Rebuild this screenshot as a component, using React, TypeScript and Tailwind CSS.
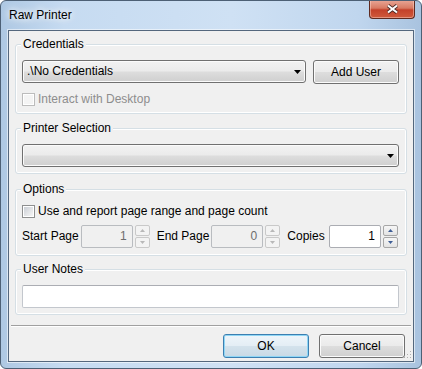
import React, { FC, ReactNode } from "react";

// Windows 7 style "Raw Printer" dialog

const comboBg =
  "bg-[linear-gradient(#f2f2f2_0%,#ebebeb_48%,#dddddd_52%,#cfcfcf_100%)] shadow-[inset_0_0_0_1px_#fbfbfb]";

const GroupBox: FC<{ title: string; className?: string; children: ReactNode }> = ({
  title,
  className,
  children,
}) => (
  <div
    className={`relative rounded-[3px] border border-[#d5dfe5] shadow-[inset_0_0_0_1px_#ffffff] ${className ?? ""}`}
  >
    <span className="absolute -top-[8px] left-[5px] bg-[#f0f0f0] px-[2px] leading-[15px]">
      {title}
    </span>
    {children}
  </div>
);

const DropArrow: FC = () => (
  <svg width="7" height="4" viewBox="0 0 7 4" className="shrink-0">
    <polygon points="0,0 7,0 3.5,4" fill="#000" />
  </svg>
);

const Combo: FC<{ text?: string; className?: string }> = ({ text, className }) => (
  <div
    className={`flex h-[23px] items-center rounded-[3px] border border-[#707070] pl-[4px] pr-[4px] ${comboBg} ${className ?? ""}`}
  >
    <span className="flex-1 leading-[15px]">{text}</span>
    <DropArrow />
  </div>
);

const PushButton: FC<{ label: string; isDefault?: boolean; className?: string }> = ({
  label,
  isDefault,
  className,
}) => (
  <button
    className={`flex h-[24px] w-[86px] items-center justify-center rounded-[3px] border leading-[15px] ${
      isDefault
        ? "border-[#3c7fb1] bg-[linear-gradient(#eef5fa_0%,#e4eef5_48%,#d3e2ec_52%,#c8d9e5_100%)] shadow-[inset_0_0_0_1px_#8fd6f5]"
        : `border-[#707070] ${comboBg}`
    } ${className ?? ""}`}
  >
    {label}
  </button>
);

const CheckBox: FC<{ label: string; disabled?: boolean }> = ({ label, disabled }) => (
  <div className="flex items-center">
    <span
      className={`box-border flex h-[13px] w-[13px] items-center justify-center border bg-white ${
        disabled ? "border-[#bcbcbc]" : "border-[#8e8f8f]"
      }`}
    >
      <span
        className={`h-[9px] w-[9px] ${
          disabled
            ? "bg-[#f4f4f4]"
            : "bg-[linear-gradient(135deg,#cbcfd5,#f6f6f6)]"
        }`}
      />
    </span>
    <span
      className={`ml-[3px] leading-[15px] ${disabled ? "text-[#8d8d8d]" : "text-black"}`}
    >
      {label}
    </span>
  </div>
);

const Spinner: FC<{ disabled?: boolean }> = ({ disabled }) => {
  const half = `flex h-[11px] w-[15px] items-center justify-center rounded-[2px] border ${
    disabled
      ? "border-[#c9c9c9] bg-[#f3f3f3]"
      : "border-[#a6a6a6] bg-[linear-gradient(#f6f6f6,#e3e3e3)]"
  }`;
  const fill = disabled ? "#b8b8b8" : "#3e5d95";
  return (
    <div className="ml-[2px] flex flex-col gap-[1px]">
      <div className={half}>
        <svg width="5" height="3" viewBox="0 0 5 3">
          <polygon points="0,3 5,3 2.5,0" fill={fill} />
        </svg>
      </div>
      <div className={half}>
        <svg width="5" height="3" viewBox="0 0 5 3">
          <polygon points="0,0 5,0 2.5,3" fill={fill} />
        </svg>
      </div>
    </div>
  );
};

const NumberBox: FC<{ value: string; disabled?: boolean }> = ({ value, disabled }) => (
  <div
    className={`flex h-[23px] w-[52px] items-center justify-end rounded-[2px] border pr-[5px] leading-[15px] ${
      disabled
        ? "border-[#b9bcc0] bg-[#f0f0f0] text-[#6d6d6d]"
        : "border-[#abadb3] bg-white text-black"
    }`}
  >
    {value}
  </div>
);

const App: FC = () => {
  return (
    <div
      className={`flex h-[369px] w-[422px] flex-col overflow-hidden rounded-[6px] border border-[#4d6075] bg-[linear-gradient(90deg,#aec8e3_0%,#c6dbf1_15%,#cfe1f4_55%,#c0d6ee_85%,#a9c3df_100%)] text-[12px] text-black ${"font-['Liberation_Sans',Arial,sans-serif]"}`}
    >
      {/* title bar */}
      <div className="flex h-[29px] shrink-0 items-start justify-between">
        <span className="ml-[8px] mt-[7px] leading-[15px] [text-shadow:0_0_6px_#ffffff,0_0_10px_#ffffff]">
          Raw Printer
        </span>
        <div className="-mt-px mr-[6px] flex h-[19px] w-[46px] items-center justify-center rounded-b-[4px] border border-t-0 border-[#5e2a20] bg-[linear-gradient(#e9a898_0%,#d87a63_45%,#c4412a_55%,#cf5a3c_100%)] shadow-[inset_0_0_0_1px_rgba(255,220,210,0.45)]">
          <svg width="13" height="10" viewBox="0 0 13 10">
            <path d="M2 1.5 L11 8.5 M11 1.5 L2 8.5" stroke="#4a2a26" strokeWidth="3.6" />
            <path d="M2 1.5 L11 8.5 M11 1.5 L2 8.5" stroke="#ffffff" strokeWidth="2" />
          </svg>
        </div>
      </div>

      {/* client area */}
      <div className="relative mx-[7px] mb-[6px] flex flex-1 flex-col border border-[#54677d] bg-[#f0f0f0] px-[6px] shadow-[0_0_0_1px_rgba(255,255,255,0.55)]">
        <GroupBox title="Credentials" className="mt-[13px] pb-[6px] pl-[6px] pr-[7px] pt-[15px]">
          <div className="flex gap-[7px]">
            <Combo text=".\No Credentials" className="flex-1" />
            <PushButton label="Add User" className="h-[23px]" />
          </div>
          <div className="mt-[8px]">
            <CheckBox label="Interact with Desktop" disabled />
          </div>
        </GroupBox>

        <GroupBox title="Printer Selection" className="mt-[14px] pb-[6px] pl-[6px] pr-[7px] pt-[15px]">
          <Combo />
        </GroupBox>

        <GroupBox title="Options" className="mt-[15px] pb-[7px] pl-[6px] pr-[8px] pt-[14px]">
          <CheckBox label="Use and report page range and page count" />
          <div className="mt-[6px] flex items-center">
            <span className="w-[59px] leading-[15px]">Start Page</span>
            <NumberBox value="1" disabled />
            <Spinner disabled />
            <span className="ml-[7px] w-[55px] leading-[15px]">End Page</span>
            <NumberBox value="0" disabled />
            <Spinner disabled />
            <span className="ml-[7px] w-[42px] leading-[15px]">Copies</span>
            <NumberBox value="1" />
            <Spinner />
          </div>
        </GroupBox>

        <GroupBox title="User Notes" className="mt-[13px] pb-[6px] pl-[6px] pr-[7px] pt-[15px]">
          <div className="h-[23px] rounded-[2px] border border-[#c3c7cd] border-t-[#abadb3] bg-white" />
        </GroupBox>

        <div className="-mx-[4px] mt-[10px] h-px bg-[#a0a0a0]" />
        <div className="-mx-[4px] h-px bg-white" />

        <div className="mt-[7px] flex justify-end gap-[10px] pr-[2px]">
          <PushButton label="OK" isDefault />
          <PushButton label="Cancel" />
        </div>

        {/* size grip */}
        <svg
          width="8"
          height="8"
          viewBox="0 0 8 8"
          className="absolute bottom-[2px] right-[1px]"
        >
          {[
            [6, 0],
            [3, 3],
            [6, 3],
            [0, 6],
            [3, 6],
            [6, 6],
          ].map(([x, y]) => (
            <rect key={`${x}-${y}`} x={x} y={y} width="1" height="1" fill="#b0b0b0" />
          ))}
        </svg>
      </div>
    </div>
  );
};

export default App;
